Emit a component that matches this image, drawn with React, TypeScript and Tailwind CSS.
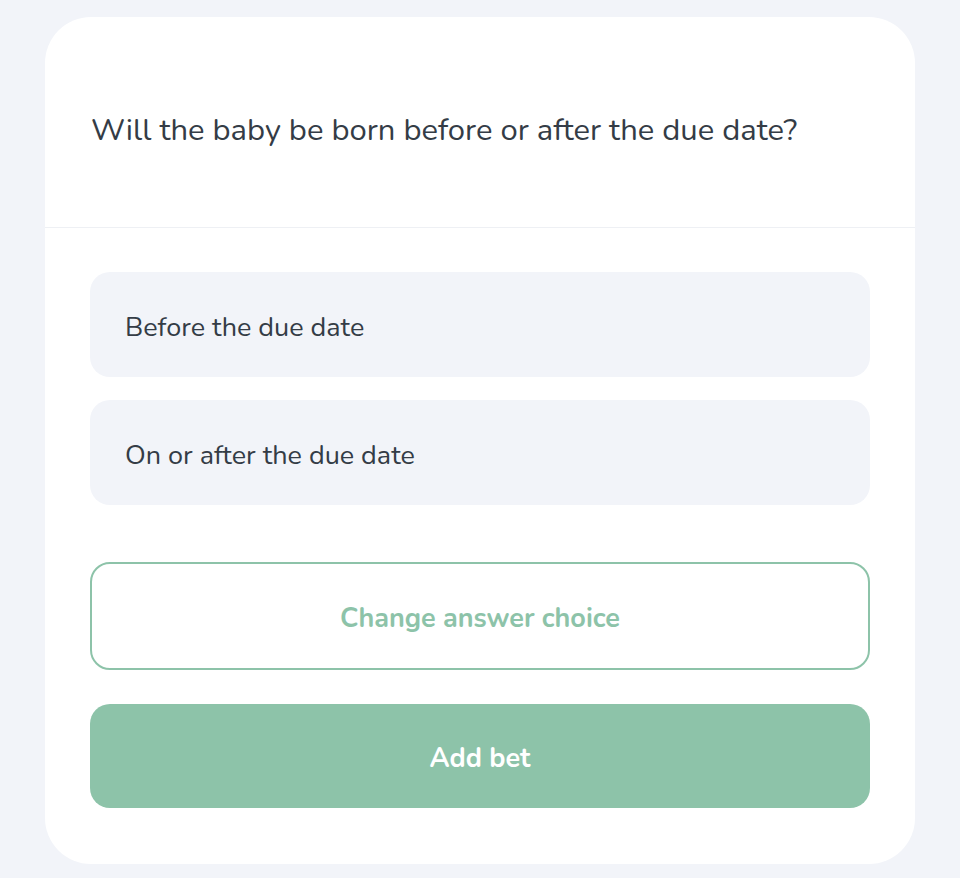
export default function App() {
  const font = { fontFamily: "Nunito, Lato, 'Noto Sans', sans-serif" };
  return (
    <div className="min-h-[878px] w-[960px] bg-[#f2f4f9] pt-[17px]" style={font}>
      <div className="mx-[45px] w-[870px] h-[847px] rounded-[46px] bg-white flex flex-col">
        <div className="pt-[94px] pb-[78px] px-[46px] border-b border-[#eef0f4]">
          <p className="text-[31px] leading-[38px] text-[#343c46] whitespace-nowrap">
            Will the baby be born before or after the due date?
          </p>
        </div>
        <div className="px-[45px] pt-[44px] flex flex-col">
          <div className="h-[105px] rounded-[20px] bg-[#f2f4f9] flex items-center px-[35px] pt-[8px] text-[27px] text-[#343c46]">
            Before the due date
          </div>
          <div className="mt-[23px] h-[105px] rounded-[20px] bg-[#f2f4f9] flex items-center px-[35px] pt-[8px] text-[27px] text-[#343c46]">
            On or after the due date
          </div>
          <button className="mt-[57px] h-[108px] rounded-[20px] border-2 border-[#8dc3a9] bg-white flex items-center justify-center pt-[6px] text-[27px] font-bold text-[#8dc3a9]">
            Change answer choice
          </button>
          <button className="mt-[34px] h-[104px] rounded-[20px] bg-[#8dc3a9] flex items-center justify-center pt-[6px] text-[27px] font-bold text-white">
            Add bet
          </button>
        </div>
      </div>
    </div>
  );
}
